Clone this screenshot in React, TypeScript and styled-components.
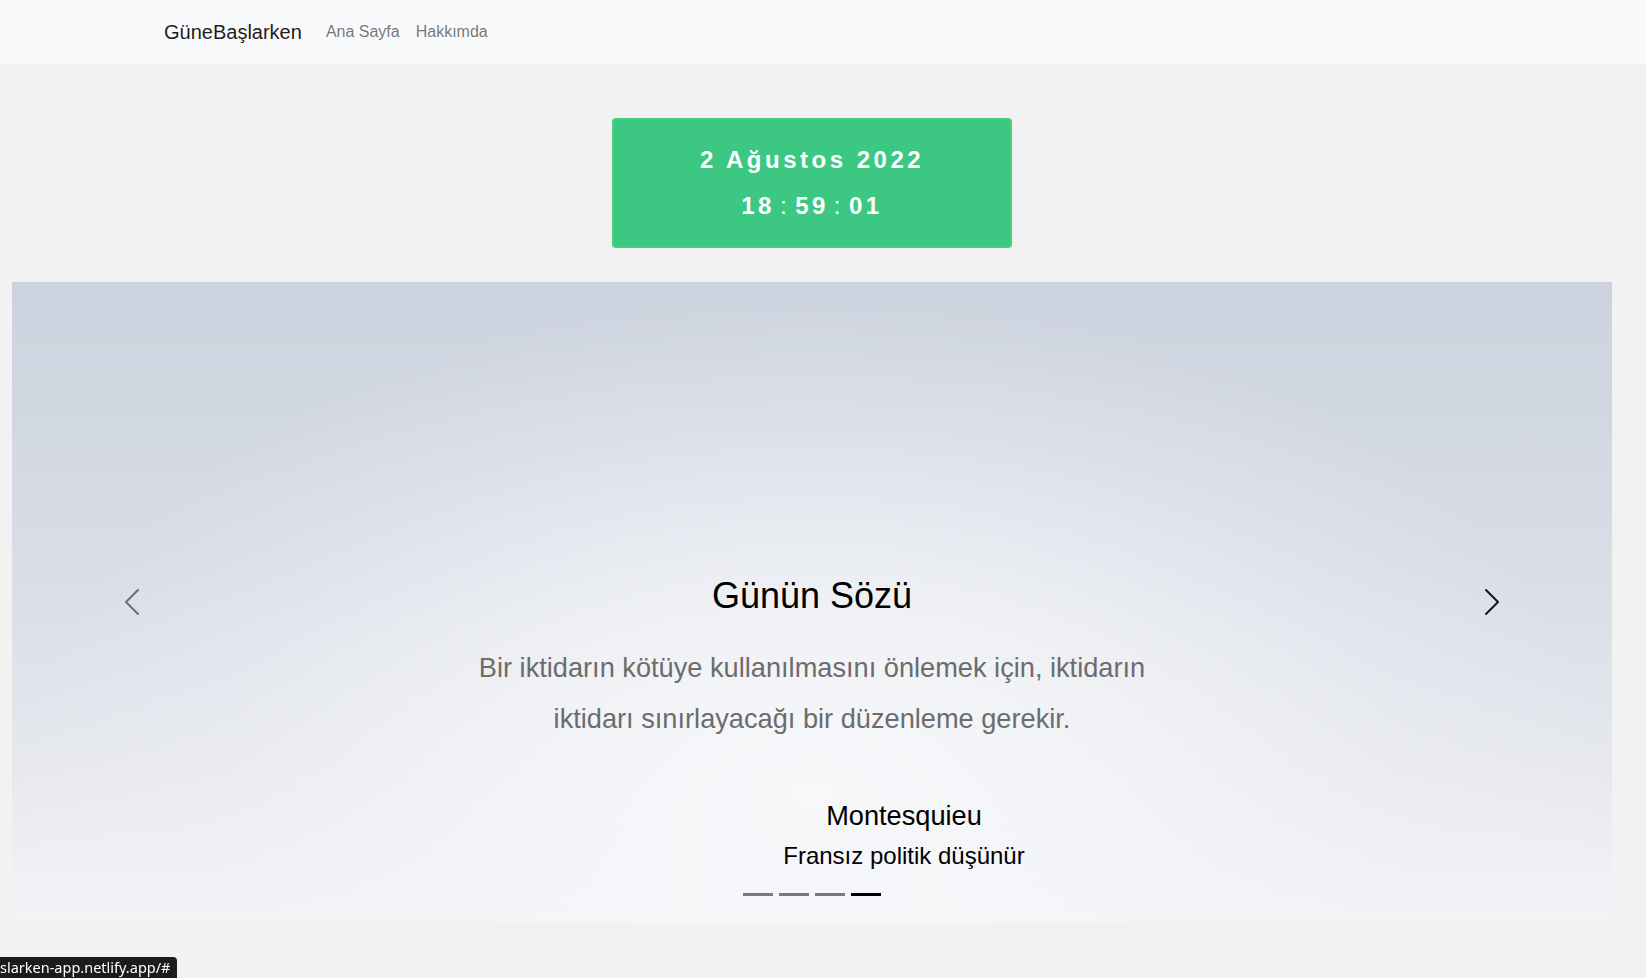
import React from "react";
import styled, { createGlobalStyle } from "styled-components";

const GlobalStyle = createGlobalStyle`
  html, body {
    margin: 0;
    padding: 0;
    background: #f2f2f2;
    font-family: "Liberation Sans", Arial, sans-serif;
    color: #212529;
  }
  * {
    box-sizing: border-box;
  }
`;

const indicators = [0, 1, 2, 3];
const activeIndex = 3;

const Navbar = styled.nav`
  background: #f8f9fa;
  height: 64px;
  width: 100%;
`;

const NavInner = styled.div`
  width: 1624px;
  height: 100%;
`;

const NavContainer = styled.div`
  max-width: 1320px;
  height: 100%;
  margin: 0 auto;
  padding: 0 12px;
  display: flex;
  align-items: center;
`;

const Brand = styled.a`
  font-size: 20px;
  color: rgba(0, 0, 0, 0.9);
  text-decoration: none;
  margin-right: 16px;
  padding: 5px 0;
`;

const NavLink = styled.a`
  font-size: 16px;
  color: rgba(0, 0, 0, 0.55);
  text-decoration: none;
  padding: 8px;
`;

const Main = styled.main`
  width: 1624px;
  padding: 54px 12px 0;
  display: flex;
  flex-direction: column;
  align-items: center;
`;

const ClockBox = styled.div`
  width: 400px;
  height: 130px;
  background: #3cc882;
  border: 2px solid #47d07c;
  border-radius: 4px;
  color: #fff;
  font-weight: 700;
  letter-spacing: 3.5px;
  display: flex;
  flex-direction: column;
  align-items: center;
  justify-content: center;
  gap: 17px;
  margin-bottom: 34px;
`;

const DateLine = styled.div`
  font-size: 24px;
  line-height: 29px;
  margin-top: -1px;
`;

const TimeLine = styled.div`
  font-size: 24px;
  line-height: 29px;
`;

const Colon = styled.span`
  font-weight: 400;
  margin: 0 5px;
`;

const Carousel = styled.section`
  position: relative;
  width: 1600px;
  height: 640px;
  background:
    radial-gradient(ellipse 50% 78% at 50% 80%, rgba(247, 248, 250, 1) 0%, rgba(245, 246, 249, 0.75) 40%, rgba(240, 242, 246, 0.3) 75%, rgba(240, 242, 246, 0) 100%),
    linear-gradient(180deg, #ccd3de 0%, #d8dde6 45%, #e6e8ee 75%, #f3f4f7 100%);
  display: flex;
  flex-direction: column;
  align-items: center;
  justify-content: flex-end;
  padding-bottom: 26px;
`;

const Control = styled.button<{ side: "left" | "right"; dim?: boolean }>`
  position: absolute;
  top: 0;
  bottom: 0;
  ${(p) => (p.side === "left" ? "left: 0;" : "right: 0;")}
  width: 15%;
  background: none;
  border: none;
  padding: 0;
  display: flex;
  align-items: center;
  justify-content: center;
  cursor: pointer;
  opacity: ${(p) => (p.dim ? 0.5 : 0.9)};
`;

const Heading = styled.h2`
  margin: 0 0 24px;
  font-size: 36px;
  font-weight: 400;
  line-height: 1.2;
  color: #000;
`;

const Quote = styled.p`
  margin: 0;
  max-width: 720px;
  font-size: 27.2px;
  line-height: 51px;
  text-align: center;
  color: #6c6c6c;
`;

const AuthorBlock = styled.div`
  margin-top: 56px;
  padding-left: 184px;
  display: flex;
  flex-direction: column;
  align-items: center;
  gap: 10px;
  color: #000;
`;

const Author = styled.div`
  font-size: 27.2px;
  line-height: 1.2;
`;

const Role = styled.div`
  font-size: 24px;
  line-height: 1.2;
`;

const Indicators = styled.div`
  margin-top: 22px;
  display: flex;
  gap: 6px;
`;

const Indicator = styled.span<{ active?: boolean }>`
  width: 30px;
  height: 3px;
  background: #000;
  opacity: ${(p) => (p.active ? 1 : 0.5)};
`;

const StatusBubble = styled.div`
  position: fixed;
  left: 0;
  bottom: 0;
  height: 21px;
  padding: 0 6px 0 0;
  background: #1c1c1c;
  border-top-right-radius: 4px;
  color: #fff;
  font-family: "Noto Sans", "DejaVu Sans", sans-serif;
  font-size: 14.5px;
  line-height: 21px;
  white-space: nowrap;
`;

const Chevron = ({ dir }: { dir: "left" | "right" }) => (
  <svg width="32" height="32" viewBox="0 0 16 16" fill="#000">
    {dir === "left" ? (
      <path d="M11.354 1.646a.5.5 0 0 1 0 .708L5.707 8l5.647 5.646a.5.5 0 0 1-.708.708l-6-6a.5.5 0 0 1 0-.708l6-6a.5.5 0 0 1 .708 0z" />
    ) : (
      <path d="M4.646 1.646a.5.5 0 0 1 .708 0l6 6a.5.5 0 0 1 0 .708l-6 6a.5.5 0 0 1-.708-.708L10.293 8 4.646 2.354a.5.5 0 0 1 0-.708z" />
    )}
  </svg>
);

const App = () => {
  return (
    <>
      <GlobalStyle />
      <Navbar>
        <NavInner>
          <NavContainer>
            <Brand href="#">GüneBaşlarken</Brand>
            <NavLink href="#">Ana Sayfa</NavLink>
            <NavLink href="#">Hakkımda</NavLink>
          </NavContainer>
        </NavInner>
      </Navbar>

      <Main>
        <ClockBox>
          <DateLine>2 Ağustos 2022</DateLine>
          <TimeLine>
            18<Colon>:</Colon>59<Colon>:</Colon>01
          </TimeLine>
        </ClockBox>

        <Carousel>
          <Control side="left" dim aria-label="Önceki">
            <Chevron dir="left" />
          </Control>

          <Heading>Günün Sözü</Heading>
          <Quote>
            Bir iktidarın kötüye kullanılmasını önlemek için, iktidarın
            iktidarı sınırlayacağı bir düzenleme gerekir.
          </Quote>
          <AuthorBlock>
            <Author>Montesquieu</Author>
            <Role>Fransız politik düşünür</Role>
          </AuthorBlock>
          <Indicators>
            {indicators.map((i) => (
              <Indicator key={i} active={i === activeIndex} />
            ))}
          </Indicators>

          <Control side="right" aria-label="Sonraki">
            <Chevron dir="right" />
          </Control>
        </Carousel>
      </Main>

      <StatusBubble>slarken-app.netlify.app/#</StatusBubble>
    </>
  );
};

export default App;
